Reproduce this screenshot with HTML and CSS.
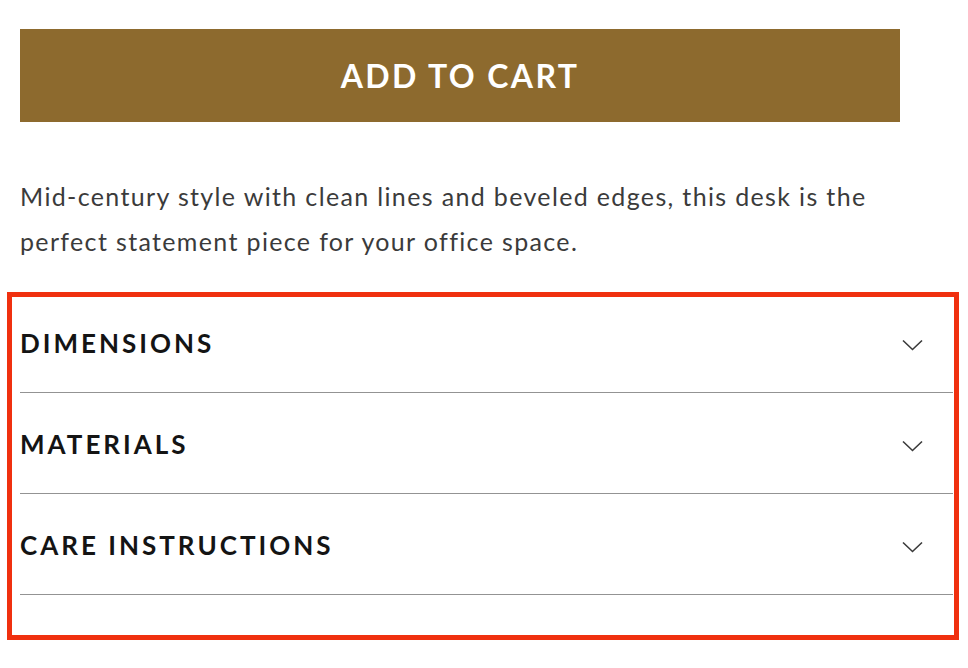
FILE: index.html
```html
<!DOCTYPE html>
<html lang="en">
<head>
<meta charset="utf-8">
<title>Product</title>
<link rel="stylesheet" href="styles.css">
</head>
<body>
<main class="product">
  <button class="add-to-cart" type="button">ADD TO CART</button>
  <p class="description">Mid-century style with clean lines and beveled edges, this desk is the perfect statement piece for your office space.</p>
  <section class="accordion">
    <div class="acc-row">
      <span class="acc-title">DIMENSIONS</span>
      <svg class="chevron" width="21" height="12" viewBox="0 0 21 12"><polyline points="1,1.5 10.5,10.5 20,1.5" fill="none" stroke="#3a3a3a" stroke-width="1.6"/></svg>
    </div>
    <div class="acc-row">
      <span class="acc-title">MATERIALS</span>
      <svg class="chevron" width="21" height="12" viewBox="0 0 21 12"><polyline points="1,1.5 10.5,10.5 20,1.5" fill="none" stroke="#3a3a3a" stroke-width="1.6"/></svg>
    </div>
    <div class="acc-row">
      <span class="acc-title">CARE INSTRUCTIONS</span>
      <svg class="chevron" width="21" height="12" viewBox="0 0 21 12"><polyline points="1,1.5 10.5,10.5 20,1.5" fill="none" stroke="#3a3a3a" stroke-width="1.6"/></svg>
    </div>
    <div class="highlight"></div>
  </section>
</main>
</body>
</html>
```

FILE: styles.css
```css
html, body {
  margin: 0;
  padding: 0;
  background: #ffffff;
}

body {
  font-family: "Lato", "Open Sans", sans-serif;
  color: #3b3b3b;
}

.product {
  padding: 29px 0 28px 20px;
  width: 933px;
}

.add-to-cart {
  display: block;
  width: 880px;
  height: 93px;
  margin: 0;
  border: 0;
  background: #8d6a2e;
  color: #ffffff;
  font-family: "Lato", sans-serif;
  font-weight: 700;
  font-size: 32px;
  letter-spacing: 2.4px;
  padding: 0;
  cursor: pointer;
}

.description {
  margin: 52px 0 0 0;
  width: 880px;
  font-size: 25px;
  line-height: 45px;
  letter-spacing: 1.35px;
  color: #3b3b3b;
}

.accordion {
  position: relative;
  margin-top: 29px;
  padding-bottom: 45px;
}

.acc-row {
  display: flex;
  align-items: center;
  justify-content: space-between;
  height: 100px;
  padding-top: 1px;
  box-sizing: border-box;
  border-bottom: 1px solid #939393;
}

.acc-row + .acc-row {
  height: 101px;
}

.acc-title {
  font-family: "Lato", sans-serif;
  font-weight: 700;
  font-size: 26px;
  letter-spacing: 3px;
  color: #141414;
}

.chevron {
  display: block;
  margin-right: 30px;
  margin-top: 4px;
}

.highlight {
  position: absolute;
  left: -13px;
  top: -1px;
  right: -6px;
  bottom: 0;
  border: 5px solid #f0300f;
  pointer-events: none;
}
```
